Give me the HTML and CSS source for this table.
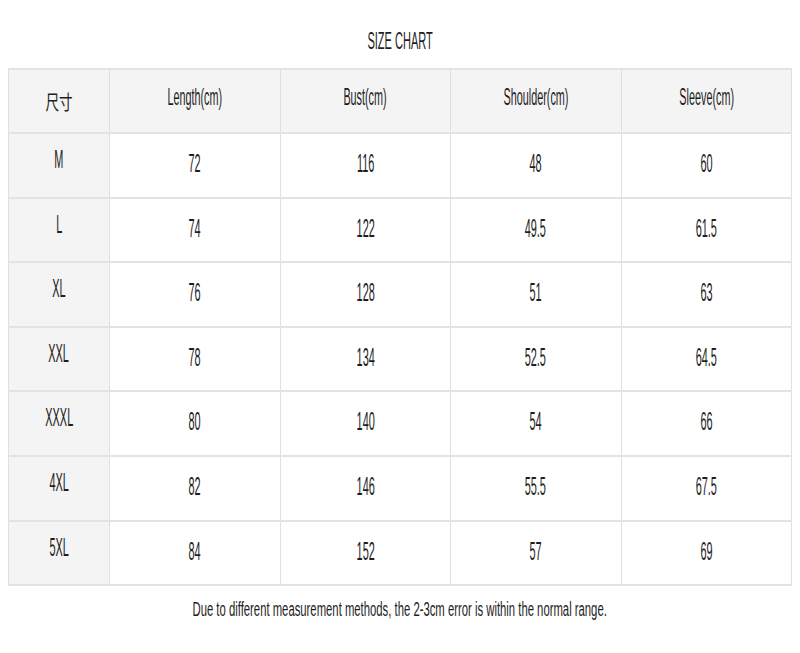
FILE: index.html
```html
<!DOCTYPE html>
<html>
<head>
<meta charset="utf-8">
<link rel="stylesheet" href="styles.css">
</head>
<body>
<h1 class="title"><span class="sq">SIZE CHART</span></h1>
<table class="chart">
  <colgroup>
    <col class="c-size">
    <col class="c-val"><col class="c-val"><col class="c-val"><col class="c-val">
  </colgroup>
  <thead>
    <tr>
      <th class="size"><span class="cjk">尺寸</span></th>
      <th><span class="sq">Length(cm)</span></th>
      <th><span class="sq">Bust(cm)</span></th>
      <th><span class="sq">Shoulder(cm)</span></th>
      <th><span class="sq">Sleeve(cm)</span></th>
    </tr>
  </thead>
  <tbody>
    <tr><td class="size"><span class="sq">M</span></td><td><span class="sq">72</span></td><td><span class="sq">116</span></td><td><span class="sq">48</span></td><td><span class="sq">60</span></td></tr>
    <tr><td class="size"><span class="sq">L</span></td><td><span class="sq">74</span></td><td><span class="sq">122</span></td><td><span class="sq">49.5</span></td><td><span class="sq">61.5</span></td></tr>
    <tr><td class="size"><span class="sq">XL</span></td><td><span class="sq">76</span></td><td><span class="sq">128</span></td><td><span class="sq">51</span></td><td><span class="sq">63</span></td></tr>
    <tr><td class="size"><span class="sq">XXL</span></td><td><span class="sq">78</span></td><td><span class="sq">134</span></td><td><span class="sq">52.5</span></td><td><span class="sq">64.5</span></td></tr>
    <tr><td class="size"><span class="sq">XXXL</span></td><td><span class="sq">80</span></td><td><span class="sq">140</span></td><td><span class="sq">54</span></td><td><span class="sq">66</span></td></tr>
    <tr><td class="size"><span class="sq">4XL</span></td><td><span class="sq">82</span></td><td><span class="sq">146</span></td><td><span class="sq">55.5</span></td><td><span class="sq">67.5</span></td></tr>
    <tr><td class="size"><span class="sq">5XL</span></td><td><span class="sq">84</span></td><td><span class="sq">152</span></td><td><span class="sq">57</span></td><td><span class="sq">69</span></td></tr>
  </tbody>
</table>
<p class="note"><span class="sq">Due to different measurement methods, the 2-3cm error is within the normal range.</span></p>
</body>
</html>
```
FILE: styles.css
```css
html, body {
  margin: 0;
  padding: 0;
  background: #ffffff;
}
body {
  padding: 0 8px;
  font-family: "Liberation Sans", Arial, sans-serif;
  color: #1e1e1e;
}
.sq {
  display: inline-block;
  transform: scaleX(0.42);
  transform-origin: center;
  white-space: nowrap;
}
.title {
  margin: 0;
  padding: 27px 0 13px;
  text-align: center;
  font-size: 24px;
  font-weight: normal;
  line-height: 28px;
}
.title .sq {
  transform: scaleX(0.46);
}
.chart {
  width: 784px;
  border-collapse: collapse;
  table-layout: fixed;
}
.c-size { width: 101px; }
.chart th, .chart td {
  border-left: 1px solid #e0e0e0;
  border-right: 1px solid #e0e0e0;
  border-top: 2px solid #e3e3e3;
  border-bottom: 2px solid #e3e3e3;
  padding: 0;
  text-align: center;
  vertical-align: top;
  font-weight: normal;
  font-size: 26px;
  line-height: 30px;
}
.chart thead th {
  height: 64px;
  padding-top: 13px;
  box-sizing: border-box;
  background: #f4f4f4;
  font-size: 24px;
  line-height: 28px;
}
.chart thead th .sq {
  transform: scaleX(0.45);
}
.chart tbody td {
  height: 64.6px;
  padding-top: 14px;
  box-sizing: border-box;
}
.chart tbody td.size {
  padding-top: 10px;
}
.chart .size {
  background: #f4f4f4;
}
.cjk {
  display: inline-block;
  font-family: "Noto Sans CJK SC", sans-serif;
  font-size: 20px;
  transform: scaleX(0.68);
  position: relative;
  top: 5px;
}
.note {
  margin: 0;
  padding-top: 11px;
  text-align: center;
  font-size: 20px;
  line-height: 24px;
}
.note .sq {
  transform: scaleX(0.565);
}
```
